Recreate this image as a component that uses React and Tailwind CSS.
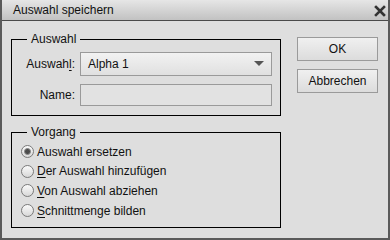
import React from "react";

function Radio({ checked }) {
  return (
    <span className="relative inline-flex w-[13px] h-[13px] rounded-full border border-[#7a7a7a] bg-gradient-to-b from-[#fafafa] to-[#d8d8d8] items-center justify-center shrink-0">
      {checked && (
        <span className="w-[7px] h-[7px] rounded-full bg-[#4a4a4a] border border-[#8a8a8a]" />
      )}
    </span>
  );
}

function RadioRow({ checked, children }) {
  return (
    <div className="flex items-center h-[19.6px] gap-[3px] pl-[9px]">
      <Radio checked={checked} />
      <span>{children}</span>
    </div>
  );
}

export default function App() {
  return (
    <div
      className="w-[390px] h-[240px] flex flex-col bg-[#dedede] border-x-2 border-b-2 border-[#5a5a5a] text-[12px] text-[#111]"
      style={{ fontFamily: '"Liberation Sans", Arial, sans-serif' }}
    >
      <div className="h-[21px] flex items-center justify-between pl-[11px] pr-[2px] bg-gradient-to-b from-[#e6e6e6] to-[#c2c2c2] border-b border-[#4a4a4a] shrink-0">
        <span className="leading-none">Auswahl speichern</span>
        <svg width="12" height="12" viewBox="0 0 12 12" className="mt-[1px]">
          <path d="M2 2 L10 10 M10 2 L2 10" stroke="#333" strokeWidth="2.6" strokeLinecap="square" />
        </svg>
      </div>
      <div className="flex pl-[9px] pt-[11px]">
        <div className="flex flex-col gap-[9px] w-[270px]">
          <fieldset className="border border-black h-[84px] px-0">
            <legend className="ml-[15px] px-[4px] leading-[14px]">Auswahl</legend>
            <div className="flex items-center mt-[6px]">
              <span className="w-[63px] text-right pr-0">
                Auswah<u className="underline-offset-2">l</u>:
              </span>
              <div className="ml-[5px] w-[192px] h-[24px] border border-[#9a9a9a] bg-gradient-to-b from-[#f2f2f2] to-[#e0e0e0] flex items-center justify-between pl-[7px] pr-[7px]">
                <span>Alpha 1</span>
                <svg width="10" height="6" viewBox="0 0 10 6">
                  <path d="M0 0 H10 L5 5 Z" fill="#555" />
                </svg>
              </div>
            </div>
            <div className="flex items-center mt-[8px]">
              <span className="w-[63px] text-right">Name:</span>
              <div className="ml-[5px] w-[192px] h-[22px] border border-[#9a9a9a] bg-[#e2e2e2]" />
            </div>
          </fieldset>
          <fieldset className="border border-black h-[103px] px-0">
            <legend className="ml-[15px] px-[4px] leading-[14px]">Vorgang</legend>
            <div className="pt-[3px]">
              <RadioRow checked>Auswahl ersetzen</RadioRow>
              <RadioRow>
                <u className="underline-offset-2">D</u>er Auswahl hinzufügen
              </RadioRow>
              <RadioRow>
                <u className="underline-offset-2">V</u>on Auswahl abziehen
              </RadioRow>
              <RadioRow>
                <u className="underline-offset-2">S</u>chnittmenge bilden
              </RadioRow>
            </div>
          </fieldset>
        </div>
        <div className="flex flex-col gap-[8px] ml-[16px] pt-[5px]">
          <button className="w-[81px] h-[24px] border border-[#9a9a9a] bg-gradient-to-b from-[#f0f0f0] to-[#dcdcdc] text-[12px]">
            OK
          </button>
          <button className="w-[81px] h-[24px] border border-[#9a9a9a] bg-gradient-to-b from-[#f0f0f0] to-[#dcdcdc] text-[12px]">
            Abbrechen
          </button>
        </div>
      </div>
    </div>
  );
}
